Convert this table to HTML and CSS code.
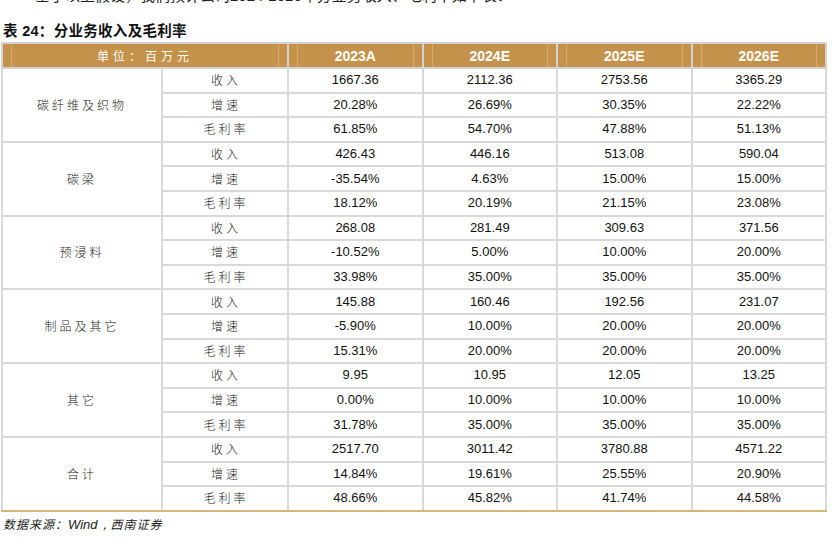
FILE: index.html
```html
<!DOCTYPE html>
<html lang="zh">
<head>
<meta charset="utf-8">
<link rel="stylesheet" href="styles.css">
</head>
<body>
<p class="intro">基于以上假设，我们预计公司2024-2026年分业务收入、毛利率如下表：</p>
<h2 class="caption">表 24：分业务收入及毛利率</h2>
<table class="fin">
  <colgroup>
    <col class="c1"><col class="c2"><col class="c3"><col class="c3"><col class="c3"><col class="c3">
  </colgroup>
  <thead>
    <tr><th colspan="2" class="unit">单位：百万元</th><th>2023A</th><th>2024E</th><th>2025E</th><th>2026E</th></tr>
  </thead>
  <tbody>
    <tr><td rowspan="3" class="seg">碳纤维及织物</td><td class="lbl">收入</td><td>1667.36</td><td>2112.36</td><td>2753.56</td><td>3365.29</td></tr>
    <tr><td class="lbl">增速</td><td>20.28%</td><td>26.69%</td><td>30.35%</td><td>22.22%</td></tr>
    <tr><td class="lbl">毛利率</td><td>61.85%</td><td>54.70%</td><td>47.88%</td><td>51.13%</td></tr>
    <tr><td rowspan="3" class="seg">碳梁</td><td class="lbl">收入</td><td>426.43</td><td>446.16</td><td>513.08</td><td>590.04</td></tr>
    <tr><td class="lbl">增速</td><td>-35.54%</td><td>4.63%</td><td>15.00%</td><td>15.00%</td></tr>
    <tr><td class="lbl">毛利率</td><td>18.12%</td><td>20.19%</td><td>21.15%</td><td>23.08%</td></tr>
    <tr><td rowspan="3" class="seg">预浸料</td><td class="lbl">收入</td><td>268.08</td><td>281.49</td><td>309.63</td><td>371.56</td></tr>
    <tr><td class="lbl">增速</td><td>-10.52%</td><td>5.00%</td><td>10.00%</td><td>20.00%</td></tr>
    <tr><td class="lbl">毛利率</td><td>33.98%</td><td>35.00%</td><td>35.00%</td><td>35.00%</td></tr>
    <tr><td rowspan="3" class="seg">制品及其它</td><td class="lbl">收入</td><td>145.88</td><td>160.46</td><td>192.56</td><td>231.07</td></tr>
    <tr><td class="lbl">增速</td><td>-5.90%</td><td>10.00%</td><td>20.00%</td><td>20.00%</td></tr>
    <tr><td class="lbl">毛利率</td><td>15.31%</td><td>20.00%</td><td>20.00%</td><td>20.00%</td></tr>
    <tr><td rowspan="3" class="seg">其它</td><td class="lbl">收入</td><td>9.95</td><td>10.95</td><td>12.05</td><td>13.25</td></tr>
    <tr><td class="lbl">增速</td><td>0.00%</td><td>10.00%</td><td>10.00%</td><td>10.00%</td></tr>
    <tr><td class="lbl">毛利率</td><td>31.78%</td><td>35.00%</td><td>35.00%</td><td>35.00%</td></tr>
    <tr class="last"><td rowspan="3" class="seg">合计</td><td class="lbl">收入</td><td>2517.70</td><td>3011.42</td><td>3780.88</td><td>4571.22</td></tr>
    <tr class="last"><td class="lbl">增速</td><td>14.84%</td><td>19.61%</td><td>25.55%</td><td>20.90%</td></tr>
    <tr class="last end"><td class="lbl">毛利率</td><td>48.66%</td><td>45.82%</td><td>41.74%</td><td>44.58%</td></tr>
  </tbody>
</table>
<p class="source">数据来源：<span class="en">Wind，</span>西南证券</p>
</body>
</html>
```
FILE: styles.css
```css
html, body {
  margin: 0;
  padding: 0;
  background: #fff;
}
body {
  width: 832px;
  height: 546px;
  overflow: hidden;
  font-family: "Liberation Sans", "Noto Sans CJK SC", sans-serif;
  color: #111;
}
.intro {
  margin: -14px 0 0 35px;
  font-size: 15px;
  line-height: 20px;
  font-family: "Liberation Sans", "Noto Sans CJK SC", sans-serif;
  color: #222;
  white-space: nowrap;
}
.caption {
  margin: 15px 0 0 3px;
  font-size: 14.5px;
  line-height: 20px;
  font-weight: bold;
  color: #111;
  letter-spacing: 0.3px;
  font-family: "Liberation Sans", "Noto Sans CJK SC", sans-serif;
}
.fin {
  margin: 1px 0 0 1px;
  border-collapse: collapse;
  table-layout: fixed;
  width: 824px;
  font-size: 13px;
}
.c1 { width: 160px; }
.c2 { width: 126px; }
.c3 { width: 134.5px; }
.fin th {
  height: 23px;
  padding: 0;
  border: 2px solid #d3d3d3;
  background-color: #c4924a;
  background-image: linear-gradient(to right,
    transparent 8px, #d6aa6c 8px, #d6aa6c 9px, transparent 9px,
    transparent calc(100% - 9px), #d6aa6c calc(100% - 9px), #d6aa6c calc(100% - 8px), transparent calc(100% - 8px));
  color: #fff;
  font-size: 14px;
  font-weight: bold;
  text-align: center;
  vertical-align: middle;
}
.fin th.unit {
  font-family: "Noto Sans CJK SC", sans-serif;
  font-size: 12px;
  font-weight: normal;
  letter-spacing: 4px;
}
.fin td {
  height: 22.6px;
  padding: 0;
  border: 2px solid #d9d9d9;
  text-align: center;
  vertical-align: middle;
  color: #111;
  line-height: 14px;
}
.fin td.seg,
.fin td.lbl {
  font-family: "Noto Sans CJK SC", sans-serif;
  font-size: 12px;
  font-weight: 300;
  letter-spacing: 3px;
  color: #222;
}
.fin td.lbl { padding-left: 2px; }
.fin tr.end td,
.fin tr.last td.seg {
  border-bottom: 2px solid #d8b478;
}
.source {
  margin: 4px 0 0 3px;
  font-family: "Noto Sans CJK SC", sans-serif;
  font-size: 12px;
  font-style: italic;
  line-height: 16px;
  color: #222;
  letter-spacing: 1px;
}
.source .en {
  font-family: "Liberation Sans", sans-serif;
  font-size: 13px;
  letter-spacing: 0;
}
```
